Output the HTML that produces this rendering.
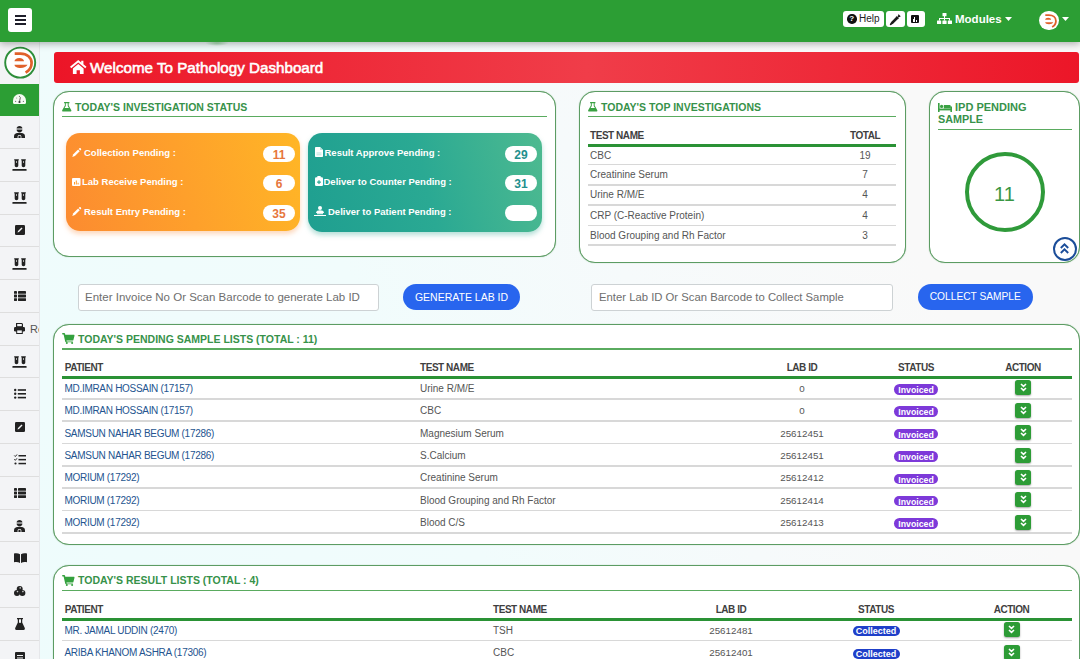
<!DOCTYPE html><html><head><meta charset="utf-8"><title>Pathology Dashboard</title><style>
*{box-sizing:border-box;margin:0;padding:0}
html,body{width:1080px;height:659px;overflow:hidden}
body{font-family:"Liberation Sans",sans-serif;background:linear-gradient(65deg,#eefcfc 0%,#f1fcfc 38%,#f6fafb 58%,#f9f9f9 80%);position:relative;color:#555}
div,span{position:absolute;white-space:nowrap}
svg{position:absolute;overflow:visible}
.card{background:#fff;border:1px solid #5c9c63;border-radius:16px;box-shadow:0 0 0.9px rgba(92,156,99,.9)}
.ct{color:#37924a;font-weight:bold;font-size:10.5px;line-height:12px}
.ul{height:1.3px;background:#5aab5f}
.bl{color:#fff;font-weight:bold;font-size:9.5px;line-height:11px}
.badge{width:32px;height:16px;background:#fff;border-radius:8px;font-weight:bold;font-size:12px;text-align:center;line-height:18.5px}
.th{font-weight:bold;font-size:10px;letter-spacing:-0.45px;color:#3f3f3f;line-height:11px}
.td{font-size:10px;color:#555;line-height:11px}
.lk{font-size:10px;letter-spacing:-0.3px;color:#24548f;line-height:11px}
.hl{height:3px;background:#2a9235}
.rl{height:1.8px;background:#d8d8d8}
.inv{width:44px;height:10.5px;border-radius:6px;background:#7d39d9;color:#fff;font-weight:bold;font-size:8.75px;line-height:12.5px;text-align:center}
.col{width:47px;height:10px;border-radius:5px;background:#1f3fc9;color:#fff;font-weight:bold;font-size:9px;line-height:10.5px;text-align:center}
.act{width:16px;height:15px;border-radius:2.5px;background:#2d9c36;box-shadow:0 1px 2px rgba(0,0,0,.35)}
.inp{height:27px;background:#fff;border:1px solid #cdd2d4;border-radius:3px;color:#6e6e6e;line-height:25px}
.btn{height:26px;border-radius:13px;background:#2865ee;color:#fff;text-align:center;line-height:26px}
.si{left:0;width:40px;height:1px;background:#dedede}
.nb{background:#fff;border-radius:3px;height:16px;top:11px}
</style></head><body>
<div style="left:0;top:0;width:1080px;height:42px;background:#2c9e34;box-shadow:0 2px 7px rgba(0,0,0,.3);z-index:5">
<div style="left:8px;top:8px;width:24px;height:24px;background:#fff;border-radius:3px"><div style="left:7px;top:6.5px;width:10.5px;height:2px;background:#1e1e2a"></div><div style="left:7px;top:10.8px;width:10.5px;height:2px;background:#1e1e2a"></div><div style="left:7px;top:15px;width:10.5px;height:2px;background:#1e1e2a"></div></div>
<div class="nb" style="left:843px;width:41px"><div style="left:4px;top:3.3px;width:9.5px;height:9.5px;border-radius:50%;background:#111;color:#fff;font-size:8px;font-weight:bold;line-height:10px;text-align:center">?</div><span style="left:16px;top:2px;font-size:10px;color:#222;line-height:12px">Help</span></div>
<div class="nb" style="left:886px;width:19px"><svg style="left:4px;top:2.5px" width="11" height="11" viewBox="0 0 11 11"><path d="M0.6 10.4 L2.2 8 L6.6 3.6 L7.4 4.4 L3 8.8 Z" fill="#1a1a1a" stroke="#1a1a1a" stroke-width="1.6" stroke-linejoin="round"/><path d="M6.2 2.6 L8.4 4.8 M8.2 0.8 L10.2 2.8 M7.4 3.8 L9.4 1.6" stroke="#1a1a1a" stroke-width="1.3"/></svg></div>
<div class="nb" style="left:907px;width:18px"><div style="left:3.5px;top:3.7px;width:8.5px;height:8.5px;background:#111;border-radius:1px"><div style="left:2px;top:4px;width:1px;height:3px;background:#fff"></div><div style="left:3.7px;top:2.5px;width:1px;height:4.5px;background:#fff"></div><div style="left:5.4px;top:5px;width:1px;height:2px;background:#fff"></div></div></div>
<svg style="left:937px;top:12.5px" width="15" height="11" viewBox="0 0 15 11" fill="#fff"><rect x="5.5" y="0" width="4" height="3.3" rx=".5"/><rect x="7" y="3" width="1" height="2.5"/><rect x="2" y="5" width="11" height="1"/><rect x="2" y="5" width="1" height="2.5"/><rect x="7" y="5" width="1" height="2.5"/><rect x="12" y="5" width="1" height="2.5"/><rect x="0" y="7.5" width="4.2" height="3.5" rx=".5"/><rect x="5.4" y="7.5" width="4.2" height="3.5" rx=".5"/><rect x="10.8" y="7.5" width="4.2" height="3.5" rx=".5"/></svg>
<span style="left:955px;top:12.5px;font-size:11.5px;font-weight:bold;color:#fff;line-height:13px">Modules</span>
<svg style="left:1005px;top:17px" width="7" height="4" viewBox="0 0 7 4"><path d="M0 0H7L3.5 4Z" fill="#fff"/></svg>
<div style="left:1039px;top:10.5px;width:19.5px;height:19.5px;border-radius:50%;background:#fff"><svg style="left:0;top:0" width="19.5" height="19.5" viewBox="4.7 47.1 31 31"><path d="M14.5 61.2 C14.5 59.3 16.5 57.9 19.3 57.9 C22 57.9 24 59.3 24 61.2 Z" fill="#e0612b"/><path d="M14.5 64.8 H27.5 C26.6 66.8 24 68 20.6 68 C17 68 14.5 66.8 14.5 64.8 Z" fill="#e0612b"/><path d="M14.7 53.6 H20.5 C27 53.6 31.6 57.6 31.6 63 C31.6 67 29.5 70.4 25.6 72.6" fill="none" stroke="#e0612b" stroke-width="2.9"/></svg></div>
<svg style="left:1062px;top:17px" width="7" height="4" viewBox="0 0 7 4"><path d="M0 0H7L3.5 4Z" fill="#fff"/></svg>
</div>
<div style="left:205px;top:40px;width:24px;height:6px;border-radius:50%;background:radial-gradient(ellipse at center,rgba(60,150,70,.45),rgba(60,150,70,0) 70%);z-index:6"></div>
<div style="left:0;top:42px;width:40px;height:617px;background:#f3f4f6;border-right:1px solid #e6e7ea;z-index:3;overflow:hidden">
<svg style="left:0;top:0" width="40" height="42" viewBox="0 42 40 42"><circle cx="20.2" cy="62.6" r="15" fill="#fff" stroke="#2e8e3a" stroke-width="1.9"/><path d="M14.5 61.2 C14.5 59.3 16.5 57.9 19.3 57.9 C22 57.9 24 59.3 24 61.2 Z" fill="#e0612b"/><path d="M14.5 64.8 H27.5 C26.6 66.8 24 68 20.6 68 C17 68 14.5 66.8 14.5 64.8 Z" fill="#e0612b"/><path d="M14.7 53.6 H20.5 C27 53.6 31.6 57.6 31.6 63 C31.6 67 29.5 70.4 25.6 72.6" fill="none" stroke="#e0612b" stroke-width="2.7"/></svg>
<div style="left:0;top:42px;width:40px;height:31.5px;background:#2c9e34">
<svg style="left:13px;top:10px" width="13" height="10" viewBox="0 0 13 10"><path d="M0 8.8 V6.5 A6.5 6.5 0 0 1 13 6.5 V8.8 C13 9.5 12.5 10 11.8 10 H1.2 C0.5 10 0 9.5 0 8.8 Z" fill="#f4fbf2"/><path d="M6.5 7.8 L7.4 3.2" stroke="#555" stroke-width=".9"/><circle cx="6.5" cy="8" r="1.1" fill="#333"/><circle cx="2.6" cy="7.4" r=".6" fill="#777"/><circle cx="3.6" cy="4" r=".6" fill="#999"/><circle cx="6.5" cy="2.4" r=".6" fill="#777"/><circle cx="10.4" cy="7.4" r=".6" fill="#777"/></svg>
</div>
<svg style="left:13.9px;top:84.0px" width="11" height="12" viewBox="0 0 11 12" fill="#222"><path d="M2.6 2.6 C2.6 1 3.9 0 5.5 0 C7.1 0 8.4 1 8.4 2.6 Z"/><path d="M2.6 3.4 H8.4 C8.4 5 7.2 6.4 5.5 6.4 C3.8 6.4 2.6 5 2.6 3.4 Z"/><path d="M0 12 V10.2 C0 8.4 1.5 7.1 3.4 7.1 H7.6 C9.5 7.1 11 8.4 11 10.2 V12 Z"/><path d="M3.6 12 V10.4 C3.6 9.5 4.4 8.9 5.5 8.9 C6.6 8.9 7.4 9.5 7.4 10.4 V12 H6.6 V10.5 C6.6 10 6.1 9.7 5.5 9.7 C4.9 9.7 4.4 10 4.4 10.5 V12 Z" fill="#f3f4f6"/></svg>
<div class="si" style="top:105.9px"></div>
<svg style="left:13px;top:117.3px" width="14" height="12" viewBox="0 0 14 12" fill="#222"><path d="M1.2 0.3 H5.8 V1.3 L5.3 1.6 V6.6 C5.3 7.6 4.6 8.3 3.5 8.3 C2.4 8.3 1.7 7.6 1.7 6.6 V1.6 L1.2 1.3 Z"/><path d="M8.2 0.3 H12.8 V1.3 L12.3 1.6 V6.6 C12.3 7.6 11.6 8.3 10.5 8.3 C9.4 8.3 8.7 7.6 8.7 6.6 V1.6 L8.2 1.3 Z"/><rect x="3.1" y="2" width=".9" height="2" fill="#bbb"/><rect x="10.1" y="2" width=".9" height="2" fill="#bbb"/><rect x="-0.6" y="10.1" width="14.2" height="1.6" rx=".5"/></svg>
<div class="si" style="top:138.7px"></div>
<svg style="left:13px;top:150.1px" width="14" height="12" viewBox="0 0 14 12" fill="#222"><path d="M1.2 0.3 H5.8 V1.3 L5.3 1.6 V6.6 C5.3 7.6 4.6 8.3 3.5 8.3 C2.4 8.3 1.7 7.6 1.7 6.6 V1.6 L1.2 1.3 Z"/><path d="M8.2 0.3 H12.8 V1.3 L12.3 1.6 V6.6 C12.3 7.6 11.6 8.3 10.5 8.3 C9.4 8.3 8.7 7.6 8.7 6.6 V1.6 L8.2 1.3 Z"/><rect x="3.1" y="2" width=".9" height="2" fill="#bbb"/><rect x="10.1" y="2" width=".9" height="2" fill="#bbb"/><rect x="-0.6" y="10.1" width="14.2" height="1.6" rx=".5"/></svg>
<div class="si" style="top:171.5px"></div>
<svg style="left:14.5px;top:183.4px" width="10" height="10" viewBox="0 0 10 10"><rect width="10" height="10" rx="1.3" fill="#222"/><path d="M2.5 7.5 L3 6 L6.5 2.5 L7.5 3.5 L4 7 Z" fill="#f3f4f6"/></svg>
<div class="si" style="top:204.3px"></div>
<svg style="left:13px;top:215.7px" width="14" height="12" viewBox="0 0 14 12" fill="#222"><path d="M1.2 0.3 H5.8 V1.3 L5.3 1.6 V6.6 C5.3 7.6 4.6 8.3 3.5 8.3 C2.4 8.3 1.7 7.6 1.7 6.6 V1.6 L1.2 1.3 Z"/><path d="M8.2 0.3 H12.8 V1.3 L12.3 1.6 V6.6 C12.3 7.6 11.6 8.3 10.5 8.3 C9.4 8.3 8.7 7.6 8.7 6.6 V1.6 L8.2 1.3 Z"/><rect x="3.1" y="2" width=".9" height="2" fill="#bbb"/><rect x="10.1" y="2" width=".9" height="2" fill="#bbb"/><rect x="-0.6" y="10.1" width="14.2" height="1.6" rx=".5"/></svg>
<div class="si" style="top:237.1px"></div>
<svg style="left:14px;top:248.9px" width="12" height="10" viewBox="0 0 12 10" fill="#222"><rect x="0" y="0.0" width="3" height="2.8" rx=".4"/><rect x="4" y="0.0" width="8" height="2.8" rx=".4"/><rect x="0" y="3.6" width="3" height="2.8" rx=".4"/><rect x="4" y="3.6" width="8" height="2.8" rx=".4"/><rect x="0" y="7.2" width="3" height="2.8" rx=".4"/><rect x="4" y="7.2" width="8" height="2.8" rx=".4"/></svg>
<div class="si" style="top:269.8px"></div>
<svg style="left:14px;top:281.2px" width="11" height="11" viewBox="0 0 11 11" fill="#222"><path d="M2 0 H8 L9 1 V4 H2 Z"/><rect x="0" y="4" width="11" height="4.5" rx="1.3"/><rect x="2.2" y="6.5" width="6.6" height="4.5"/><rect x="3.2" y="1" width="4.6" height="2.2" fill="#f3f4f6"/><rect x="3.2" y="7.4" width="4.6" height="2.6" fill="#f3f4f6"/></svg><span style="left:30px;top:280.7px;font-size:11px;color:#555;line-height:12px">Re</span>
<div class="si" style="top:302.6px"></div>
<svg style="left:13px;top:314.0px" width="14" height="12" viewBox="0 0 14 12" fill="#222"><path d="M1.2 0.3 H5.8 V1.3 L5.3 1.6 V6.6 C5.3 7.6 4.6 8.3 3.5 8.3 C2.4 8.3 1.7 7.6 1.7 6.6 V1.6 L1.2 1.3 Z"/><path d="M8.2 0.3 H12.8 V1.3 L12.3 1.6 V6.6 C12.3 7.6 11.6 8.3 10.5 8.3 C9.4 8.3 8.7 7.6 8.7 6.6 V1.6 L8.2 1.3 Z"/><rect x="3.1" y="2" width=".9" height="2" fill="#bbb"/><rect x="10.1" y="2" width=".9" height="2" fill="#bbb"/><rect x="-0.6" y="10.1" width="14.2" height="1.6" rx=".5"/></svg>
<div class="si" style="top:335.4px"></div>
<svg style="left:14px;top:347.3px" width="12" height="10" viewBox="0 0 12 10" fill="#222"><circle cx="1.2" cy="1.0" r="1.2"/><rect x="3.8" y="0.2" width="8.2" height="1.6"/><circle cx="1.2" cy="4.8" r="1.2"/><rect x="3.8" y="4.0" width="8.2" height="1.6"/><circle cx="1.2" cy="8.6" r="1.2"/><rect x="3.8" y="7.8" width="8.2" height="1.6"/></svg>
<div class="si" style="top:368.2px"></div>
<svg style="left:14.5px;top:380.1px" width="10" height="10" viewBox="0 0 10 10"><rect width="10" height="10" rx="1.3" fill="#222"/><path d="M2.5 7.5 L3 6 L6.5 2.5 L7.5 3.5 L4 7 Z" fill="#f3f4f6"/></svg>
<div class="si" style="top:401.0px"></div>
<svg style="left:14px;top:412.4px" width="12" height="11" viewBox="0 0 12 11"><path d="M0.3 1.5 L1.3 2.5 L3 0.5 M0.3 5.3 L1.3 6.3 L3 4.3" stroke="#222" stroke-width="1" fill="none"/><circle cx="1.5" cy="9.5" r="1.1" fill="#222"/><rect x="4.5" y="1.0" width="7.5" height="1.5" fill="#222"/><rect x="4.5" y="4.9" width="7.5" height="1.5" fill="#222"/><rect x="4.5" y="8.8" width="7.5" height="1.5" fill="#222"/></svg>
<div class="si" style="top:433.8px"></div>
<svg style="left:14px;top:445.7px" width="12" height="10" viewBox="0 0 12 10" fill="#222"><rect x="0" y="0.0" width="3" height="2.8" rx=".4"/><rect x="4" y="0.0" width="8" height="2.8" rx=".4"/><rect x="0" y="3.6" width="3" height="2.8" rx=".4"/><rect x="4" y="3.6" width="8" height="2.8" rx=".4"/><rect x="0" y="7.2" width="3" height="2.8" rx=".4"/><rect x="4" y="7.2" width="8" height="2.8" rx=".4"/></svg>
<div class="si" style="top:466.6px"></div>
<svg style="left:13.9px;top:477.5px" width="11" height="12" viewBox="0 0 11 12" fill="#222"><path d="M2.6 2.6 C2.6 1 3.9 0 5.5 0 C7.1 0 8.4 1 8.4 2.6 Z"/><path d="M2.6 3.4 H8.4 C8.4 5 7.2 6.4 5.5 6.4 C3.8 6.4 2.6 5 2.6 3.4 Z"/><path d="M0 12 V10.2 C0 8.4 1.5 7.1 3.4 7.1 H7.6 C9.5 7.1 11 8.4 11 10.2 V12 Z"/><path d="M3.6 12 V10.4 C3.6 9.5 4.4 8.9 5.5 8.9 C6.6 8.9 7.4 9.5 7.4 10.4 V12 H6.6 V10.5 C6.6 10 6.1 9.7 5.5 9.7 C4.9 9.7 4.4 10 4.4 10.5 V12 Z" fill="#f3f4f6"/></svg>
<div class="si" style="top:499.4px"></div>
<svg style="left:13.5px;top:511.3px" width="13" height="10" viewBox="0 0 13 10" fill="#222"><path d="M0 0.5 C2.5 0 4.5 0.3 6 1.2 V10 C4.5 9 2.5 8.8 0 9.2 Z"/><path d="M13 0.5 C10.5 0 8.5 0.3 7 1.2 V10 C8.5 9 10.5 8.8 13 9.2 Z"/></svg>
<div class="si" style="top:532.2px"></div>
<svg style="left:13.8px;top:544.1px" width="11.4" height="10" viewBox="0 0 11.4 10" fill="#222"><circle cx="5.7" cy="3" r="3"/><circle cx="3" cy="7" r="3"/><circle cx="8.4" cy="7" r="3"/><circle cx="6.2" cy="1.9" r=".8" fill="#ccc"/><circle cx="3.5" cy="5.6" r=".8" fill="#ccc"/><circle cx="8.9" cy="5.6" r=".8" fill="#ccc"/></svg>
<div class="si" style="top:564.9px"></div>
<svg style="left:15px;top:575.8px" width="10" height="12" viewBox="0 0 10 12" fill="#222"><path d="M2 0 H8 V1.3 H7.2 V4.5 L9.8 10 C10.1 11 9.6 12 8.6 12 H1.4 C0.4 12 -0.1 11 0.2 10 L2.8 4.5 V1.3 H2 Z"/><rect x="4" y="1.3" width="2" height="3.5" fill="#f3f4f6"/></svg>
<div class="si" style="top:597.7px"></div>
<svg style="left:15px;top:608.6px" width="10" height="13" viewBox="0 0 10 13" fill="#222"><rect x="0" y="1" width="10" height="12" rx="1"/><rect x="2" y="4" width="6" height="1" fill="#f3f4f6"/><rect x="2" y="6.5" width="6" height="1" fill="#f3f4f6"/><rect x="2" y="9" width="6" height="1" fill="#f3f4f6"/></svg>
<div class="si" style="top:630.5px"></div>
</div>
<div style="left:54px;top:52px;width:1025px;height:31px;border-radius:3px;background:linear-gradient(90deg,#ec1527 0%,#f03d49 52%,#ec1628 100%)">
<svg style="left:15.8px;top:7.7px" width="16.5" height="14" viewBox="0 0 16 13.5" fill="#fff"><path d="M8 0 L0 6.6 L1.2 8 L8 2.3 L14.8 8 L16 6.6 L13 4.1 V0.6 H10.9 V2.4 Z"/><path d="M2.8 8.2 L8 3.9 L13.2 8.2 V13.5 H9.6 V9.8 H6.4 V13.5 H2.8 Z"/></svg>
<span style="left:36px;top:6.5px;font-size:15.2px;color:#fff;line-height:17px;-webkit-text-stroke:0.55px #fff">Welcome To Pathology Dashboard</span>
</div>
<div class="card" style="left:53px;top:91px;width:503px;height:166px"></div>
<svg style="left:62.0px;top:101.8px" width="9.5" height="9.5" viewBox="0 0 10 10" fill="#3aa143"><path d="M2.2 0 H7.8 V1.2 H7 V3.8 L9.8 8.6 C10.1 9.4 9.6 10 8.8 10 H1.2 C0.4 10 -0.1 9.4 0.2 8.6 L3 3.8 V1.2 H2.2 Z"/><path d="M4 1.2 H6 V4.2 L7.3 6.3 H2.7 L4 4.2 Z" fill="#fff"/></svg>
<span class="ct" style="left:75px;top:101px">TODAY'S INVESTIGATION STATUS</span>
<div class="ul" style="left:62px;top:115.8px;width:485px"></div>
<div style="left:66px;top:133px;width:234px;height:98px;border-radius:14px;background:linear-gradient(75deg,#fc8b30 0%,#fea02b 50%,#ffb626 100%);box-shadow:0 3px 5px rgba(250,140,60,.35)"></div>
<div style="left:308px;top:133px;width:234px;height:99px;border-radius:14px;background:linear-gradient(75deg,#1f9f90 0%,#2aa993 50%,#4eba90 100%);box-shadow:0 3px 5px rgba(40,160,140,.35)"></div>
<svg style="left:71.5px;top:147.5px" width="9.5" height="9" viewBox="0 0 10 10" fill="#fff"><path d="M0 10 L1.2 7 L6.5 1.7 L8.3 3.5 L3 8.8 Z"/><path d="M7.2 1 L8 0.2 C8.4 -0.1 8.9 -0.1 9.3 0.3 L9.7 0.7 C10.1 1.1 10.1 1.6 9.8 2 L9 2.8 Z"/></svg>
<span class="bl" style="left:84px;top:146.5px">Collection Pending :</span>
<svg style="left:71.5px;top:177.5px" width="8.5" height="8" viewBox="0 0 8.5 8"><rect width="8.5" height="8" rx="1" fill="#fff"/><rect x="2" y="4" width="1" height="2.5" fill="#fd9a2d"/><rect x="3.8" y="2.5" width="1" height="4" fill="#fd9a2d"/><rect x="5.6" y="4.8" width="1" height="1.7" fill="#fd9a2d"/></svg>
<span class="bl" style="left:82px;top:176px">Lab Receive Pending :</span>
<svg style="left:71.5px;top:206.5px" width="9.5" height="9" viewBox="0 0 10 10" fill="#fff"><path d="M0 10 L1.2 7 L6.5 1.7 L8.3 3.5 L3 8.8 Z"/><path d="M7.2 1 L8 0.2 C8.4 -0.1 8.9 -0.1 9.3 0.3 L9.7 0.7 C10.1 1.1 10.1 1.6 9.8 2 L9 2.8 Z"/></svg>
<span class="bl" style="left:84px;top:205.5px">Result Entry Pending :</span>
<div class="badge" style="left:263px;top:145.5px;color:#e6763c">11</div>
<div class="badge" style="left:263px;top:175.0px;color:#e6763c">6</div>
<div class="badge" style="left:263px;top:204.5px;color:#e6763c">35</div>
<svg style="left:314.5px;top:146.5px" width="8" height="10" viewBox="0 0 8 10"><path d="M0 0.8 C0 0.3 0.3 0 0.8 0 H5 L8 3 V9.2 C8 9.7 7.7 10 7.2 10 H0.8 C0.3 10 0 9.7 0 9.2 Z" fill="#fff"/><path d="M5 0 V3 H8" fill="#bde6df"/><path d="M1.5 6 H6.5 M1.5 7.8 H6.5" stroke="#9fd8cf" stroke-width=".7"/></svg>
<span class="bl" style="left:324.5px;top:146.5px">Result Approve Pending :</span>
<svg style="left:314.5px;top:176px" width="8" height="10" viewBox="0 0 8 10"><rect x="0" y="1.2" width="8" height="8.8" rx="1.2" fill="#fff"/><rect x="2.3" y="0" width="3.4" height="2.2" rx=".5" fill="#fff"/><path d="M4 4.2 V8 M2.1 6.1 H5.9" stroke="#27a892" stroke-width="1.2"/></svg>
<span class="bl" style="left:323.5px;top:176px">Deliver to Counter Pending :</span>
<svg style="left:313.5px;top:205.5px" width="12" height="10" viewBox="0 0 12 10" fill="#fff"><circle cx="6" cy="2" r="2"/><path d="M2 7 C2 5 4 4.3 6 4.3 C8 4.3 10 5 10 7 Z"/><rect x="3" y="7.2" width="6" height="1" /><rect x="0" y="9" width="12" height="1"/></svg>
<span class="bl" style="left:328px;top:205.5px">Deliver to Patient Pending :</span>
<div class="badge" style="left:505px;top:145.5px;color:#238f8d">29</div>
<div class="badge" style="left:505px;top:175.0px;color:#238f8d">31</div>
<div class="badge" style="left:505px;top:204.5px;color:#238f8d"></div>
<div class="card" style="left:579px;top:91px;width:327px;height:172px"></div>
<svg style="left:588.0px;top:101.8px" width="9.5" height="9.5" viewBox="0 0 10 10" fill="#3aa143"><path d="M2.2 0 H7.8 V1.2 H7 V3.8 L9.8 8.6 C10.1 9.4 9.6 10 8.8 10 H1.2 C0.4 10 -0.1 9.4 0.2 8.6 L3 3.8 V1.2 H2.2 Z"/><path d="M4 1.2 H6 V4.2 L7.3 6.3 H2.7 L4 4.2 Z" fill="#fff"/></svg>
<span class="ct" style="left:601px;top:101px">TODAY'S TOP INVESTIGATIONS</span>
<div class="ul" style="left:588px;top:115.8px;width:308px"></div>
<span class="th" style="left:590px;top:129.5px">TEST NAME</span>
<span class="th" style="left:850px;top:129.5px">TOTAL</span>
<div class="hl" style="left:588px;top:143.7px;width:308px"></div>
<span class="td" style="left:590px;top:150.1px">CBC</span>
<span class="td" style="left:845px;width:40px;text-align:center;top:150.1px">19</span>
<div class="rl" style="left:588px;top:163.7px;width:308px"></div>
<span class="td" style="left:590px;top:169.1px">Creatinine Serum</span>
<span class="td" style="left:845px;width:40px;text-align:center;top:169.1px">7</span>
<div class="rl" style="left:588px;top:184.0px;width:308px"></div>
<span class="td" style="left:590px;top:189.3px">Urine R/M/E</span>
<span class="td" style="left:845px;width:40px;text-align:center;top:189.3px">4</span>
<div class="rl" style="left:588px;top:204.3px;width:308px"></div>
<span class="td" style="left:590px;top:209.6px">CRP (C-Reactive Protein)</span>
<span class="td" style="left:845px;width:40px;text-align:center;top:209.6px">4</span>
<div class="rl" style="left:588px;top:224.5px;width:308px"></div>
<span class="td" style="left:590px;top:229.5px">Blood Grouping and Rh Factor</span>
<span class="td" style="left:845px;width:40px;text-align:center;top:229.5px">3</span>
<div class="rl" style="left:588px;top:244.1px;width:308px"></div>
<div class="card" style="left:929px;top:91px;width:151px;height:172px"></div>
<svg style="left:938px;top:102.5px" width="14" height="9" viewBox="0 0 14 9" fill="#3aa143"><rect x="0" y="0" width="1.6" height="9"/><rect x="0" y="5.6" width="14" height="1.8"/><rect x="12.4" y="3.5" width="1.6" height="5.5"/><circle cx="3.6" cy="3.4" r="1.6"/><path d="M5.8 2 H11.5 C12.3 2 12.8 2.6 12.8 3.4 V5.6 H5.8 Z"/></svg>
<span class="ct" style="left:955px;top:101px;font-size:11px">IPD PENDING</span>
<span class="ct" style="left:938px;top:113px;font-size:10.8px">SAMPLE</span>
<div class="ul" style="left:938px;top:129px;width:134px"></div>
<div style="left:964.5px;top:152px;width:80px;height:80px;border-radius:50%;border:4px solid #2f9a3a"></div>
<span style="left:964.5px;top:182.5px;width:80px;text-align:center;font-size:20px;color:#3a9744;line-height:22px">11</span>
<div style="left:1052.5px;top:237px;width:24px;height:24px;border-radius:50%;border:2px solid #1b4d99;background:#fff"><svg style="left:5.5px;top:3.5px" width="9" height="11" viewBox="0 0 9 11"><path d="M0.8 5 L4.5 1.3 L8.2 5 M0.8 10 L4.5 6.3 L8.2 10" fill="none" stroke="#1b4d99" stroke-width="1.9"/></svg></div>
<div class="inp" style="left:78px;top:284px;width:301px;font-size:11.5px;padding-left:6px"><span style="left:6px;top:0">Enter Invoice No Or Scan Barcode to generate Lab ID</span></div>
<div class="btn" style="left:403px;top:284px;width:117px;font-size:10.5px"><span style="left:0;top:0;width:117px">GENERATE LAB ID</span></div>
<div class="inp" style="left:591px;top:284px;width:302px;font-size:11.3px"><span style="left:7px;top:0">Enter Lab ID Or Scan Barcode to Collect Sample</span></div>
<div class="btn" style="left:917.5px;top:284px;width:115.5px;font-size:10.2px"><span style="left:0;top:0;width:115.5px">COLLECT SAMPLE</span></div>
<div class="card" style="left:53px;top:323.6px;width:1027px;height:221.5px"></div>
<svg style="left:62.0px;top:332.8px" width="12.5" height="11" viewBox="0 0 12.5 11" fill="#34a13e"><path d="M0 0.9 C0 0.4 0.4 0 0.9 0 H2.2 C2.7 0 3 0.3 3.1 0.8 L3.3 1.8 H11.8 C12.3 1.8 12.6 2.3 12.5 2.8 L11.4 6.9 C11.3 7.3 11 7.6 10.6 7.6 H4.5 L4.7 8.4 H10.8 V9.3 H4 C3.6 9.3 3.3 9 3.2 8.6 L1.6 1.4 H0.9 C0.4 1.4 0 1.2 0 0.9 Z"/><circle cx="4.8" cy="10" r="1"/><circle cx="10.1" cy="10" r="1"/></svg>
<span class="ct" style="left:78px;top:332.9px">TODAY'S PENDING SAMPLE LISTS (TOTAL : 11)</span>
<div class="ul" style="left:62px;top:348.3px;width:1010px"></div>
<span class="th" style="left:64.7px;top:362.1px">PATIENT</span>
<span class="th" style="left:420.0px;top:362.1px">TEST NAME</span>
<span class="th" style="left:762.0px;width:80px;text-align:center;top:362.1px">LAB ID</span>
<span class="th" style="left:876.0px;width:80px;text-align:center;top:362.1px">STATUS</span>
<span class="th" style="left:983.0px;width:80px;text-align:center;top:362.1px">ACTION</span>
<div class="hl" style="left:62px;top:376.4px;width:1010px"></div>
<span class="lk" style="left:64.5px;top:382.9px">MD.IMRAN HOSSAIN (17157)</span>
<span class="td" style="left:420.0px;top:382.9px">Urine R/M/E</span>
<span class="td" style="left:762.0px;width:80px;text-align:center;top:382.9px;font-size:9.8px">0</span>
<div class="inv" style="left:894.0px;top:384.0px">Invoiced</div>
<div class="act" style="left:1015.0px;top:380.4px"><svg style="left:4.5px;top:3px" width="7" height="9" viewBox="0 0 7 9"><path d="M1 1 L3.5 3.3 L6 1 M1 5 L3.5 7.3 L6 5" fill="none" stroke="#fff" stroke-width="1.6"/></svg></div>
<div class="rl" style="left:62px;top:397.8px;width:1010px"></div>
<span class="lk" style="left:64.5px;top:405.3px">MD.IMRAN HOSSAIN (17157)</span>
<span class="td" style="left:420.0px;top:405.3px">CBC</span>
<span class="td" style="left:762.0px;width:80px;text-align:center;top:405.3px;font-size:9.8px">0</span>
<div class="inv" style="left:894.0px;top:406.4px">Invoiced</div>
<div class="act" style="left:1015.0px;top:402.8px"><svg style="left:4.5px;top:3px" width="7" height="9" viewBox="0 0 7 9"><path d="M1 1 L3.5 3.3 L6 1 M1 5 L3.5 7.3 L6 5" fill="none" stroke="#fff" stroke-width="1.6"/></svg></div>
<div class="rl" style="left:62px;top:420.2px;width:1010px"></div>
<span class="lk" style="left:64.5px;top:427.6px">SAMSUN NAHAR BEGUM (17286)</span>
<span class="td" style="left:420.0px;top:427.6px">Magnesium Serum</span>
<span class="td" style="left:762.0px;width:80px;text-align:center;top:427.6px;font-size:9.8px">25612451</span>
<div class="inv" style="left:894.0px;top:428.7px">Invoiced</div>
<div class="act" style="left:1015.0px;top:425.1px"><svg style="left:4.5px;top:3px" width="7" height="9" viewBox="0 0 7 9"><path d="M1 1 L3.5 3.3 L6 1 M1 5 L3.5 7.3 L6 5" fill="none" stroke="#fff" stroke-width="1.6"/></svg></div>
<div class="rl" style="left:62px;top:442.5px;width:1010px"></div>
<span class="lk" style="left:64.5px;top:450.0px">SAMSUN NAHAR BEGUM (17286)</span>
<span class="td" style="left:420.0px;top:450.0px">S.Calcium</span>
<span class="td" style="left:762.0px;width:80px;text-align:center;top:450.0px;font-size:9.8px">25612451</span>
<div class="inv" style="left:894.0px;top:451.1px">Invoiced</div>
<div class="act" style="left:1015.0px;top:447.5px"><svg style="left:4.5px;top:3px" width="7" height="9" viewBox="0 0 7 9"><path d="M1 1 L3.5 3.3 L6 1 M1 5 L3.5 7.3 L6 5" fill="none" stroke="#fff" stroke-width="1.6"/></svg></div>
<div class="rl" style="left:62px;top:464.9px;width:1010px"></div>
<span class="lk" style="left:64.5px;top:472.4px">MORIUM (17292)</span>
<span class="td" style="left:420.0px;top:472.4px">Creatinine Serum</span>
<span class="td" style="left:762.0px;width:80px;text-align:center;top:472.4px;font-size:9.8px">25612412</span>
<div class="inv" style="left:894.0px;top:473.5px">Invoiced</div>
<div class="act" style="left:1015.0px;top:469.9px"><svg style="left:4.5px;top:3px" width="7" height="9" viewBox="0 0 7 9"><path d="M1 1 L3.5 3.3 L6 1 M1 5 L3.5 7.3 L6 5" fill="none" stroke="#fff" stroke-width="1.6"/></svg></div>
<div class="rl" style="left:62px;top:487.3px;width:1010px"></div>
<span class="lk" style="left:64.5px;top:494.8px">MORIUM (17292)</span>
<span class="td" style="left:420.0px;top:494.8px">Blood Grouping and Rh Factor</span>
<span class="td" style="left:762.0px;width:80px;text-align:center;top:494.8px;font-size:9.8px">25612414</span>
<div class="inv" style="left:894.0px;top:495.9px">Invoiced</div>
<div class="act" style="left:1015.0px;top:492.3px"><svg style="left:4.5px;top:3px" width="7" height="9" viewBox="0 0 7 9"><path d="M1 1 L3.5 3.3 L6 1 M1 5 L3.5 7.3 L6 5" fill="none" stroke="#fff" stroke-width="1.6"/></svg></div>
<div class="rl" style="left:62px;top:509.7px;width:1010px"></div>
<span class="lk" style="left:64.5px;top:517.1px">MORIUM (17292)</span>
<span class="td" style="left:420.0px;top:517.1px">Blood C/S</span>
<span class="td" style="left:762.0px;width:80px;text-align:center;top:517.1px;font-size:9.8px">25612413</span>
<div class="inv" style="left:894.0px;top:518.2px">Invoiced</div>
<div class="act" style="left:1015.0px;top:514.6px"><svg style="left:4.5px;top:3px" width="7" height="9" viewBox="0 0 7 9"><path d="M1 1 L3.5 3.3 L6 1 M1 5 L3.5 7.3 L6 5" fill="none" stroke="#fff" stroke-width="1.6"/></svg></div>
<div class="rl" style="left:62px;top:532.0px;width:1010px"></div>
<div class="card" style="left:53px;top:565.4px;width:1027px;height:200.0px"></div>
<svg style="left:62.0px;top:574.6px" width="12.5" height="11" viewBox="0 0 12.5 11" fill="#34a13e"><path d="M0 0.9 C0 0.4 0.4 0 0.9 0 H2.2 C2.7 0 3 0.3 3.1 0.8 L3.3 1.8 H11.8 C12.3 1.8 12.6 2.3 12.5 2.8 L11.4 6.9 C11.3 7.3 11 7.6 10.6 7.6 H4.5 L4.7 8.4 H10.8 V9.3 H4 C3.6 9.3 3.3 9 3.2 8.6 L1.6 1.4 H0.9 C0.4 1.4 0 1.2 0 0.9 Z"/><circle cx="4.8" cy="10" r="1"/><circle cx="10.1" cy="10" r="1"/></svg>
<span class="ct" style="left:78px;top:573.8px">TODAY'S RESULT LISTS (TOTAL : 4)</span>
<div class="ul" style="left:62px;top:590.1px;width:1010px"></div>
<span class="th" style="left:64.7px;top:603.9px">PATIENT</span>
<span class="th" style="left:493.0px;top:603.9px">TEST NAME</span>
<span class="th" style="left:691.0px;width:80px;text-align:center;top:603.9px">LAB ID</span>
<span class="th" style="left:836.0px;width:80px;text-align:center;top:603.9px">STATUS</span>
<span class="th" style="left:971.5px;width:80px;text-align:center;top:603.9px">ACTION</span>
<div class="hl" style="left:62px;top:618.2px;width:1010px"></div>
<span class="lk" style="left:64.5px;top:624.7px">MR. JAMAL UDDIN (2470)</span>
<span class="td" style="left:493.0px;top:624.7px">TSH</span>
<span class="td" style="left:691.0px;width:80px;text-align:center;top:624.7px;font-size:9.8px">25612481</span>
<div class="col" style="left:852.5px;top:626.2px">Collected</div>
<div class="act" style="left:1003.5px;top:622.2px"><svg style="left:4.5px;top:3px" width="7" height="9" viewBox="0 0 7 9"><path d="M1 1 L3.5 3.3 L6 1 M1 5 L3.5 7.3 L6 5" fill="none" stroke="#fff" stroke-width="1.6"/></svg></div>
<div class="rl" style="left:62px;top:639.6px;width:1010px"></div>
<span class="lk" style="left:64.5px;top:647.1px">ARIBA KHANOM ASHRA (17306)</span>
<span class="td" style="left:493.0px;top:647.1px">CBC</span>
<span class="td" style="left:691.0px;width:80px;text-align:center;top:647.1px;font-size:9.8px">25612401</span>
<div class="col" style="left:852.5px;top:648.6px">Collected</div>
<div class="act" style="left:1003.5px;top:644.6px"><svg style="left:4.5px;top:3px" width="7" height="9" viewBox="0 0 7 9"><path d="M1 1 L3.5 3.3 L6 1 M1 5 L3.5 7.3 L6 5" fill="none" stroke="#fff" stroke-width="1.6"/></svg></div>
<div class="rl" style="left:62px;top:662.0px;width:1010px"></div>
</body></html>
